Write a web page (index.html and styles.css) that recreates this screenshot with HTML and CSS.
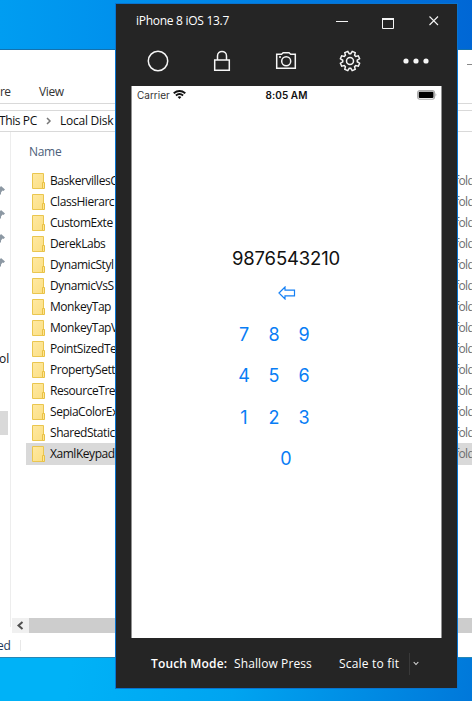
FILE: index.html
```html
<!DOCTYPE html>
<html lang="en">
<head>
<meta charset="utf-8">
<title>iPhone 8 iOS 13.7</title>
<link rel="stylesheet" href="styles.css">
</head>
<body>
<svg class="defs" width="0" height="0">
  <defs>
    <linearGradient id="paper" x1="0" y1="0" x2="1" y2="1"><stop offset="0" stop-color="#ffe9a2"/><stop offset="1" stop-color="#fbdf84"/></linearGradient>
    <symbol id="folder" viewBox="0 0 14 16"><path d="M.5.5H11.5V15.500H.5Z" fill="url(#paper)" stroke="#eac64f"/><path d="M10.500 9.500H12.500V15.500H10.500Z" fill="#ffe596" stroke="#e8c144"/></symbol>
    <symbol id="pin" viewBox="0 0 6 10"><path d="M0 2.500 2 0 6 3.500 4.500 5 3.500 4.500 2 6.500V9L0 7Z" fill="#8c98a3"/></symbol>
  </defs>
</svg>
<main class="desktop">
  <section class="explorer">
    <div class="ribbon"><span class="share">re</span><span class="view">View</span><span class="minimize"></span></div>
    <div class="address"><span class="pc">This PC</span><svg width="6" height="8" viewBox="0 0 6 8"><path d="M1 1 4 4 1 7" fill="none" stroke="#777" stroke-width="1.500"/></svg><span class="disk">Local Disk</span></div>
    <div class="panes">
      <nav class="sidebar">
        <svg><use href="#pin"/></svg><svg><use href="#pin"/></svg><svg><use href="#pin"/></svg><svg><use href="#pin"/></svg>
        <span class="tool">ol</span><div class="current"></div>
      </nav>
      <div class="files">
        <div class="heading">Name</div>
        <ul>
          <li><svg><use href="#folder"/></svg><span>BaskervillesC</span><em>fold</em></li>
          <li><svg><use href="#folder"/></svg><span>ClassHierarc</span><em>fold</em></li>
          <li><svg><use href="#folder"/></svg><span>CustomExte</span><em>fold</em></li>
          <li><svg><use href="#folder"/></svg><span>DerekLabs</span><em>fold</em></li>
          <li><svg><use href="#folder"/></svg><span>DynamicStyl</span><em>fold</em></li>
          <li><svg><use href="#folder"/></svg><span>DynamicVsS</span><em>fold</em></li>
          <li><svg><use href="#folder"/></svg><span>MonkeyTap</span><em>fold</em></li>
          <li><svg><use href="#folder"/></svg><span>MonkeyTapV</span><em>fold</em></li>
          <li><svg><use href="#folder"/></svg><span>PointSizedTe</span><em>fold</em></li>
          <li><svg><use href="#folder"/></svg><span>PropertySett</span><em>fold</em></li>
          <li><svg><use href="#folder"/></svg><span>ResourceTree</span><em>fold</em></li>
          <li><svg><use href="#folder"/></svg><span>SepiaColorEx</span><em>fold</em></li>
          <li><svg><use href="#folder"/></svg><span>SharedStatic</span><em>fold</em></li>
          <li class="selected"><svg><use href="#folder"/></svg><span>XamlKeypad</span><em>fold</em></li>
        </ul>
        <div class="scrollbar"><svg width="17" height="15" viewBox="0 0 17 15"><path d="M10.500 4 6.500 7.500 10.500 11" fill="none" stroke="#505050" stroke-width="2"/></svg><div class="thumb"></div></div>
      </div>
    </div>
    <div class="status"><span>ed</span></div>
  </section>

  <section class="simulator">
    <header class="titlebar">
      <h1>iPhone 8 iOS 13.7</h1>
      <svg class="controls" width="108" height="18" viewBox="0 0 108 18"><g fill="none" stroke="#f4f4f4"><path d="M1 8.500H13"/><path d="M47.500 5V15.500H58.500V5"/><path d="M47 6H59" stroke-width="2"/><path d="M94.500 3.500 103 12M103 3.500 94.500 12" stroke-width="1.100"/></g></svg>
    </header>
    <div class="toolbar">
      <svg class="home" width="22" height="22" viewBox="0 0 22 22"><circle cx="11" cy="11" r="9.700"/></svg>
      <svg class="lock" width="18" height="22" viewBox="0 0 18 22"><path d="M1.700 10H16.300V20.200H1.700ZM4.500 10V6C4.500 0 13.500 0 13.500 6V10"/></svg>
      <svg class="camera" width="22" height="22" viewBox="0 0 22 22"><path d="M1.700 4.200H6.500L8.200 2.700H14L15.700 4.200H20.300V18.300H1.700Z"/><circle cx="11.200" cy="11.200" r="4.500"/><path d="M4 7H6"/></svg>
      <svg class="gear" width="22" height="22" viewBox="0 0 22 22"><path transform="rotate(22.5 11 11)" d="M9.400 1.300H12.600L13.100 4 14.500 4.600 16.700 3.000 19.000 5.300 17.400 7.500 18.000 8.900 20.700 9.400V12.600L18.000 13.100 17.400 14.500 19.000 16.700 16.700 19.000 14.500 17.400 13.100 18 12.600 20.700H9.400L8.900 18 7.500 17.400 5.300 19 3 16.700 4.600 14.500 4 13.100 1.300 12.600V9.400L4 8.900 4.600 7.500 3 5.300 5.300 3 7.500 4.600 8.900 4Z"/><circle cx="11" cy="11" r="3.500"/></svg>
      <svg class="more" width="26" height="6" viewBox="0 0 26 6"><circle cx="3" cy="3" r="2.600"/><circle cx="13" cy="3" r="2.600"/><circle cx="23" cy="3" r="2.600"/></svg>
    </div>
    <div class="phone">
      <div class="statusbar">
        <div class="carrier"><span>Carrier</span><svg width="13" height="9" viewBox="0 0 13 9"><g fill="none" stroke="#111" stroke-width="1.900"><path d="M.7 3.300Q6.500-1.200 12.300 3.300M2.900 5.500Q6.500 2.500 10.100 5.500"/></g><path d="M4.600 6.900Q6.500 5.500 8.400 6.900L6.500 9Z" fill="#111"/></svg></div>
        <time>8:05 AM</time>
        <svg class="battery" width="20" height="10" viewBox="0 0 20 10"><rect x=".6" y=".6" width="17" height="8.600" rx="2.400" fill="#fff" stroke="#aaa" stroke-width="1.100"/><rect x="1.700" y="1.700" width="14.800" height="6.400" rx="1.100"/><path d="M18.500 3.300Q20.300 4.800 18.500 6.400Z" fill="#aaa"/></svg>
      </div>
      <div class="keypad">
        <output>9876543210</output>
        <svg class="delete" width="18" height="14" viewBox="0 0 18 14"><path d="M1 7 7 1V4.200H16.500V9.800H7V13Z" fill="none" stroke="#1580f5" stroke-width="1.200"/></svg>
        <div class="keys"><b>7</b><b>8</b><b>9</b><b>4</b><b>5</b><b>6</b><b>1</b><b>2</b><b>3</b></div>
        <b class="zero">0</b>
      </div>
    </div>
    <footer><strong>Touch Mode:</strong><span class="press">Shallow Press</span><span class="scale">Scale to fit</span><span class="divider"></span><svg width="6" height="5" viewBox="0 0 6 5"><path d="M.7 1 3 3.500 5.300 1" fill="none" stroke="#ddd" stroke-width="1.100"/></svg></footer>
  </section>
</main>
</body>
</html>
```
FILE: styles.css
```css
* { box-sizing: border-box; }
body { margin: 0; font: 12px/16px "Open Sans", "Noto Sans", sans-serif; color: #111; }
svg { display: block; flex: none; }
.defs { position: absolute; }
.desktop {
  position: relative; width: 472px; height: 701px; overflow: hidden;
  background: linear-gradient(90deg, #009df1, #0089ea 40%, #0067d5);
}
.desktop::after {
  content: ""; position: absolute; inset: 657px 0 0;
  background: linear-gradient(100deg, #00b2f7 15%, #00a4f0 50%, #0078da);
}
.explorer {
  position: absolute; z-index: 1; top: 49px; left: 0; width: 472px; height: 609px;
  display: flex; flex-direction: column; background: #fff;
  border-top: 1px solid #1472ae; border-bottom: 1px solid #2687b5;
}
.ribbon { display: flex; height: 54px; padding-top: 34px; border-bottom: 1px solid #d9d9d9; color: #333; }
.ribbon .share { width: 39px; letter-spacing: -.6px; }
.ribbon .view { letter-spacing: -.35px; }
.ribbon .minimize { width: 5px; height: 1px; margin: -20px 0 0 auto; background: #888; }
.address {
  display: flex; align-items: center; height: 22px; margin-top: 6px;
  border: solid #d9d9d9; border-width: 1px 0; white-space: nowrap;
}
.pc { margin-left: -1px; width: 47px; letter-spacing: -.4px; }
.disk { margin-left: 8px; letter-spacing: -.25px; }
.panes { display: flex; height: 502px; }
.sidebar { flex: none; width: 11px; border-right: 1px solid #ededed; padding-top: 54px; height: 495px; }
.sidebar svg { width: 6px; height: 10px; margin-bottom: 14px; margin-left: -1px; }
.tool { display: block; margin: 83px 0 0 -1px; }
.current { width: 8px; height: 24px; margin-top: 44px; background: #d9d9d9; }
.files { flex: 1; min-width: 0; display: flex; flex-direction: column; }
.heading { padding: 12px 0 0 18px; height: 38px; color: #4c607a; letter-spacing: -.3px; }
ul { margin: 0; padding: 0; list-style: none; }
li { display: flex; align-items: center; height: 21px; margin-left: 15px; padding-left: 6px; white-space: nowrap; }
li svg { width: 14px; height: 16px; }
li span { flex: none; width: 405px; margin-left: 4px; letter-spacing: -.45px; }
li em { font-style: normal; color: #6d6d6d; letter-spacing: -.6px; }
.selected { height: 22px; background: #d9d9d9; }
.scrollbar { display: flex; height: 15px; margin: auto 0 1px 1px; background: #f0f0f0; }
.thumb { flex: 1; background: #cdcdcd; }
.status { color: #1e395b; height: 22px; padding-top: 6px; }
.status span { display: block; width: 21px; height: 11px; line-height: 11px; letter-spacing: -.3px; border-right: 1px solid #e8e8e8; text-indent: -3px; }

.simulator {
  position: absolute; z-index: 2; left: 115px; top: 3px; width: 343px; height: 686px;
  display: flex; flex-direction: column; background: #252525; color: #fff;
  border: 1px solid #0874d0;
}
.titlebar { display: flex; height: 36px; padding: 9px 14px 0 20px; }
h1 { margin: 0 auto 0 0; font-size: 12px; font-weight: 400; letter-spacing: -.28px; }
.toolbar { display: flex; align-items: center; height: 42px; padding-left: 30.5px; }
.toolbar svg { fill: none; stroke: #f6f6f6; stroke-width: 1.5; }
.toolbar .lock { margin-left: 44px; }
.toolbar .camera { margin-left: 44px; }
.toolbar .gear { margin-left: 42px; }
.toolbar .more { margin-left: 42px; fill: #f6f6f6; stroke: none; }
.phone {
  height: 552px; width: 311px; margin: 4px 0 0 15px; background: #fff; color: #111;
  border: solid #919191; border-width: 0 1px; font-family: Inter, Roboto, sans-serif;
}
.statusbar { display: grid; grid-template-columns: 1fr 1fr 1fr; align-items: center; height: 17px; padding: 0 4px 0 5px; font-size: 10px; }
.carrier { display: flex; gap: 3px; align-items: center; color: #333; }
time { font-weight: 600; text-align: center; letter-spacing: .05px; margin-left: -1px; }
.battery { margin-left: auto; }
.keypad { display: flex; flex-direction: column; align-items: center; padding-top: 143px; font-size: 18px; }
output { height: 24px; line-height: 24px; font-size: 18.5px; letter-spacing: -.15px; margin-right: 1px; }
.delete { margin-top: 16px; }
.keys { display: grid; grid-template-columns: repeat(3, 30px); grid-auto-rows: 41.5px; margin: 14px 25px 0 0; }
b { display: grid; place-items: center; font-weight: 400; color: #087df5; }
.zero { height: 41px; margin-right: 1px; }
footer { display: flex; flex: 1; align-items: center; padding: 1px 0 0 35px; white-space: nowrap; }
strong { width: 83px; font-weight: 600; letter-spacing: .15px; }
.press { width: 105px; letter-spacing: .1px; }
.scale { width: 70px; letter-spacing: .2px; }
.divider { width: 1px; height: 22px; margin-right: 3px; background: #393939; }
```
